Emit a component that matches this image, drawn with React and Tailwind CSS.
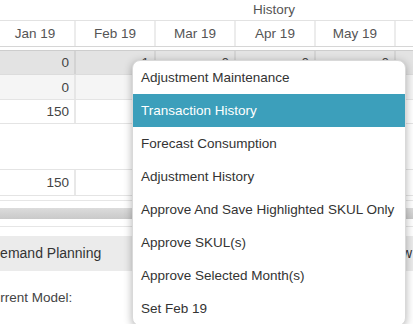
import React from 'react'

const months = ['Jan 19', 'Feb 19', 'Mar 19', 'Apr 19', 'May 19', '']

const menuItems = [
  'Adjustment Maintenance',
  'Transaction History',
  'Forecast Consumption',
  'Adjustment History',
  'Approve And Save Highlighted SKUL Only',
  'Approve SKUL(s)',
  'Approve Selected Month(s)',
  'Set Feb 19',
]

const Row = ({ values, className, cellClass }) => (
  <div className={`flex ${className}`}>
    {values.map((v, i) => (
      <div
        key={i}
        className={`w-[80px] shrink-0 text-right pr-[5px] ${cellClass}`}
      >
        {v}
      </div>
    ))}
  </div>
)

const App = () => {
  return (
    <div
      className="relative w-[413px] h-[324px] overflow-hidden bg-white text-[13.5px] text-[#555]"
      style={{ fontFamily: '"Liberation Sans", Arial, sans-serif' }}
    >
      {/* Grid */}
      <div className="-ml-[4px]">
        {/* group header */}
        <div className="h-[20px] leading-[20px] pl-[257px] text-[#555]">History</div>

        {/* month headers */}
        <div className="flex h-[27px] border-t border-[#e2e2e2] border-b border-b-[#d6d6d6]">
          {months.map((m, i) => (
            <div
              key={i}
              className="w-[80px] shrink-0 text-center leading-[26px] border-r-2 border-[#ececec]"
            >
              {m}
            </div>
          ))}
        </div>

        {/* row 1 */}
        <div className="h-[3px] bg-white" />
        <Row
          values={['0', '1', '0', '0', '0', '']}
          className="h-[24px] bg-[#e3e3e3] border-t border-[#cdcdcd]"
          cellClass="leading-[24px] border-r-2 border-[#d3d3d3] text-[#444]"
        />

        {/* row 2 */}
        <Row
          values={['0', '', '', '', '', '']}
          className="h-[25px] bg-[#f5f5f5] border-t border-[#dcdcdc]"
          cellClass="leading-[26px] border-r-2 border-[#e6e6e6] text-[#444]"
        />

        {/* row 3 */}
        <Row
          values={['150', '', '', '', '', '']}
          className="h-[25px] bg-white border-t border-[#e4e4e4] border-b"
          cellClass="leading-[24px] border-r-2 border-[#e8e8e8] text-[#444]"
        />

        <div className="h-[45px]" />

        {/* row 4 */}
        <Row
          values={['150', '', '', '', '', '']}
          className="h-[27px] bg-white border-t border-[#e4e4e4] border-b"
          cellClass="leading-[26px] border-r-2 border-[#e8e8e8] text-[#444]"
        />
      </div>

      {/* scroll area */}
      <div className="h-[4px]" />
      <div className="h-[1px] bg-[#e6e6e6]" />
      <div className="h-[7px]" />
      <div className="h-[11px] bg-gradient-to-b from-[#dcdcdc] to-[#c9c9c9]" />
      <div className="h-[7px]" />
      <div className="h-[1px] bg-[#e6e6e6]" />
      <div className="h-[9px]" />

      {/* section band */}
      <div className="flex justify-between items-center h-[35px] bg-[#ebebeb] text-[14px] text-[#333]">
        <span className="-ml-[10px]">Demand Planning</span>
        <span className="pr-[1px]">Overview</span>
      </div>

      <div className="pt-[17px] -ml-[17px] text-[#444]">Current Model:</div>

      {/* context menu */}
      <div className="absolute left-[132px] top-[60px] w-[274px] bg-white border border-[#d9d9d9] rounded-[8px] shadow-[0_2px_8px_rgba(0,0,0,0.3)] overflow-hidden">
        {menuItems.map((item, i) => (
          <div
            key={item}
            className={`h-[33px] leading-[33px] px-[8px] whitespace-nowrap ${
              i === 1 ? 'bg-[#3c9fbb] text-white' : 'text-[#333]'
            }`}
          >
            {item}
          </div>
        ))}
      </div>
    </div>
  )
}

export default App
